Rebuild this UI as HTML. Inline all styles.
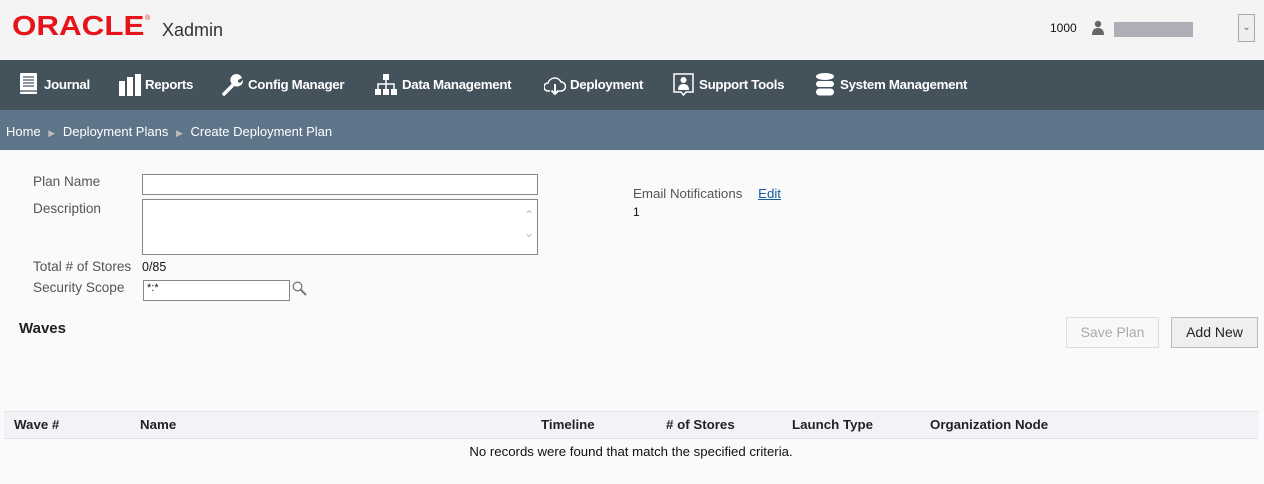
<!DOCTYPE html>
<html><head><meta charset="utf-8"><style>
*{margin:0;padding:0;box-sizing:border-box}
body{width:1264px;height:484px;background:#fafafa;font-family:"Liberation Sans",Arial,sans-serif;position:relative;overflow:hidden;font-size:13px;color:#333}
.a{position:absolute}
#hdr{left:0;top:0;width:1264px;height:60px;background:#f4f4f4}
#nav{left:0;top:60px;width:1264px;height:50px;background:#44525c}
#bc{left:0;top:110px;width:1264px;height:40px;background:#5e7489;color:#fff;font-size:13px}
.ni{position:absolute;top:0;height:50px;line-height:50px;color:#fff;font-weight:bold;font-size:13.3px;letter-spacing:-0.3px}
.ni svg{position:absolute;top:13px}
.lbl{color:#555;font-size:13.6px}
.inp{background:#fff;border:1px solid #888}
</style></head><body>
<div id="hdr" class="a">
 <div class="a" style="left:12px;top:11px;color:#e5141b;font-size:28px;font-weight:bold;transform:scaleX(1.12);transform-origin:left;line-height:30px">ORACLE</div>
 <div class="a" style="left:145px;top:15px;color:#e5141b;font-size:7px">®</div>
 <div class="a" style="left:162px;top:20px;font-size:18px;color:#333">Xadmin</div>
 <div class="a" style="left:1050px;top:21px;font-size:12px;color:#111">1000</div>
 <svg class="a" style="left:1091px;top:20px" width="14" height="16" viewBox="0 0 14 16"><circle cx="7" cy="4" r="3.2" fill="#666"/><path d="M1 15 Q1 8 7 8 Q13 8 13 15Z" fill="#666"/></svg>
 <div class="a" style="left:1114px;top:22px;width:79px;height:15px;background:#aeaeb6"></div>
 <div class="a" style="left:1238px;top:14px;width:17px;height:28px;border:1px solid #aaa;background:#eee;font-size:10px;color:#666;text-align:center;line-height:26px">&#8964;</div>
</div>
<div id="nav" class="a">
 <div class="ni" style="left:20px;padding-left:24px"><svg style="left:0" width="18" height="22" viewBox="0 0 18 22"><rect x="0" y="0" width="17" height="21" rx="1" fill="#fff"/><g stroke="#44525c" stroke-width="1.2"><line x1="3" y1="4" x2="14" y2="4"/><line x1="3" y1="7" x2="14" y2="7"/><line x1="3" y1="10" x2="14" y2="10"/><line x1="3" y1="13" x2="14" y2="13"/><line x1="0" y1="18" x2="17" y2="18"/></g></svg>Journal</div>
 <div class="ni" style="left:119px;padding-left:26px"><svg style="left:0;top:14px" width="22" height="22" viewBox="0 0 22 22"><rect x="0" y="7" width="6" height="15" fill="#fff"/><rect x="8" y="3" width="6" height="19" fill="#fff"/><rect x="16" y="0" width="6" height="22" fill="#fff"/></svg>Reports</div>
 <div class="ni" style="left:222px;padding-left:26px"><svg style="left:0;top:14px" width="22" height="22" viewBox="0 0 22 22"><path d="M2 20 L12 10" stroke="#fff" stroke-width="3.5" stroke-linecap="round"/><path d="M11 11 A6 6 0 1 1 20 4 L16 6 L16 8 L18 9 L21 6 A6 6 0 0 1 11 11Z" fill="#fff"/></svg>Config Manager</div>
 <div class="ni" style="left:375px;padding-left:27px"><svg style="left:0;top:14px" width="22" height="22" viewBox="0 0 22 22"><g fill="#fff"><rect x="8" y="0" width="6" height="6"/><rect x="0" y="15" width="6" height="6"/><rect x="8" y="15" width="6" height="6"/><rect x="16" y="15" width="6" height="6"/></g><path d="M11 6V15M3 15V10H19V15" stroke="#fff" stroke-width="1.5" fill="none"/></svg>Data Management</div>
 <div class="ni" style="left:544px;padding-left:26px"><svg style="left:0;top:14px" width="22" height="22" viewBox="0 0 22 22"><path d="M6 17 H4 A4 4 0 0 1 4 9 A7 7 0 0 1 17 8 A4.5 4.5 0 0 1 17 17 H15" stroke="#fff" stroke-width="1.5" fill="none"/><path d="M11 10 V20 M7.5 16.5 L11 20 L14.5 16.5" stroke="#fff" stroke-width="2" fill="none"/></svg>Deployment</div>
 <div class="ni" style="left:673px;padding-left:26px"><svg style="left:0;top:13px" width="21" height="23" viewBox="0 0 21 23"><path d="M1 1H20V19H13L10.5 22L8 19H1Z" stroke="#fff" stroke-width="1.5" fill="none"/><circle cx="10.5" cy="7" r="3" fill="#fff"/><path d="M5 17 Q5 11 10.5 11 Q16 11 16 17Z" fill="#fff"/></svg>Support Tools</div>
 <div class="ni" style="left:816px;padding-left:24px"><svg style="left:0;top:13px" width="18" height="23" viewBox="0 0 18 23"><ellipse cx="9" cy="3.5" rx="9" ry="3.5" fill="#fff"/><rect x="0" y="8" width="18" height="6" rx="3" fill="#fff"/><rect x="0" y="15.5" width="18" height="7" rx="3.5" fill="#fff"/></svg>System Management</div>
</div>
<div id="bc" class="a"><div class="a" style="left:6px;top:14px;white-space:nowrap">Home <span style="color:#bbb;font-size:9px;margin:0 4px">&#9654;</span> Deployment Plans <span style="color:#bbb;font-size:9px;margin:0 4px">&#9654;</span> Create Deployment Plan</div></div>

<div class="a lbl" style="left:33px;top:174px">Plan Name</div>
<div class="a inp" style="left:142px;top:174px;width:396px;height:21px"></div>
<div class="a lbl" style="left:33px;top:201px">Description</div>
<div class="a inp" style="left:142px;top:199px;width:396px;height:56px"><div class="a" style="right:3px;top:6px;color:#bbb;font-size:12px;line-height:18px">&#8963;<br>&#8964;</div></div>
<div class="a lbl" style="left:33px;top:259px">Total # of Stores</div>
<div class="a" style="left:142px;top:260px;color:#111;font-size:12.5px">0/85</div>
<div class="a lbl" style="left:33px;top:280px">Security Scope</div>
<div class="a inp" style="left:143px;top:280px;width:147px;height:21px;font-size:11px;color:#111;padding-left:3px;line-height:14px">*:*</div>
<svg class="a" style="left:292px;top:281px" width="15" height="15" viewBox="0 0 15 15"><circle cx="5.5" cy="5.5" r="4.3" stroke="#777" stroke-width="1.3" fill="none"/><line x1="8.7" y1="8.7" x2="14" y2="14" stroke="#777" stroke-width="2"/></svg>
<div class="a lbl" style="left:633px;top:186px;font-size:13.3px">Email Notifications <span style="color:#145c9e;text-decoration:underline;margin-left:12px">Edit</span></div>
<div class="a" style="left:633px;top:205px;color:#111;font-size:12px">1</div>

<div class="a" style="left:19px;top:320px;font-size:15px;font-weight:bold;color:#222">Waves</div>
<div class="a" style="left:1066px;top:317px;width:93px;height:31px;border:1px solid #ddd;background:#f8f8f8;color:#aaa;font-size:14px;text-align:center;line-height:29px">Save Plan</div>
<div class="a" style="left:1171px;top:317px;width:87px;height:31px;border:1px solid #bbb;background:#efefef;color:#222;font-size:14px;text-align:center;line-height:29px">Add New</div>

<div class="a" style="left:4px;top:411px;width:1254px;height:28px;background:#f1f3f6;border-top:1px solid #dfe2e6;border-bottom:1px solid #dfe2e6;font-weight:bold;font-size:13.3px;color:#222">
 <span class="a" style="left:10px;top:5px">Wave #</span>
 <span class="a" style="left:136px;top:5px">Name</span>
 <span class="a" style="left:537px;top:5px">Timeline</span>
 <span class="a" style="left:662px;top:5px">#&nbsp;of Stores</span>
 <span class="a" style="left:788px;top:5px">Launch Type</span>
 <span class="a" style="left:926px;top:5px">Organization Node</span>
</div>
<div class="a" style="left:0;top:444px;width:1262px;text-align:center;font-size:13.2px;color:#111">No records were found that match the specified criteria.</div>
</body></html>
